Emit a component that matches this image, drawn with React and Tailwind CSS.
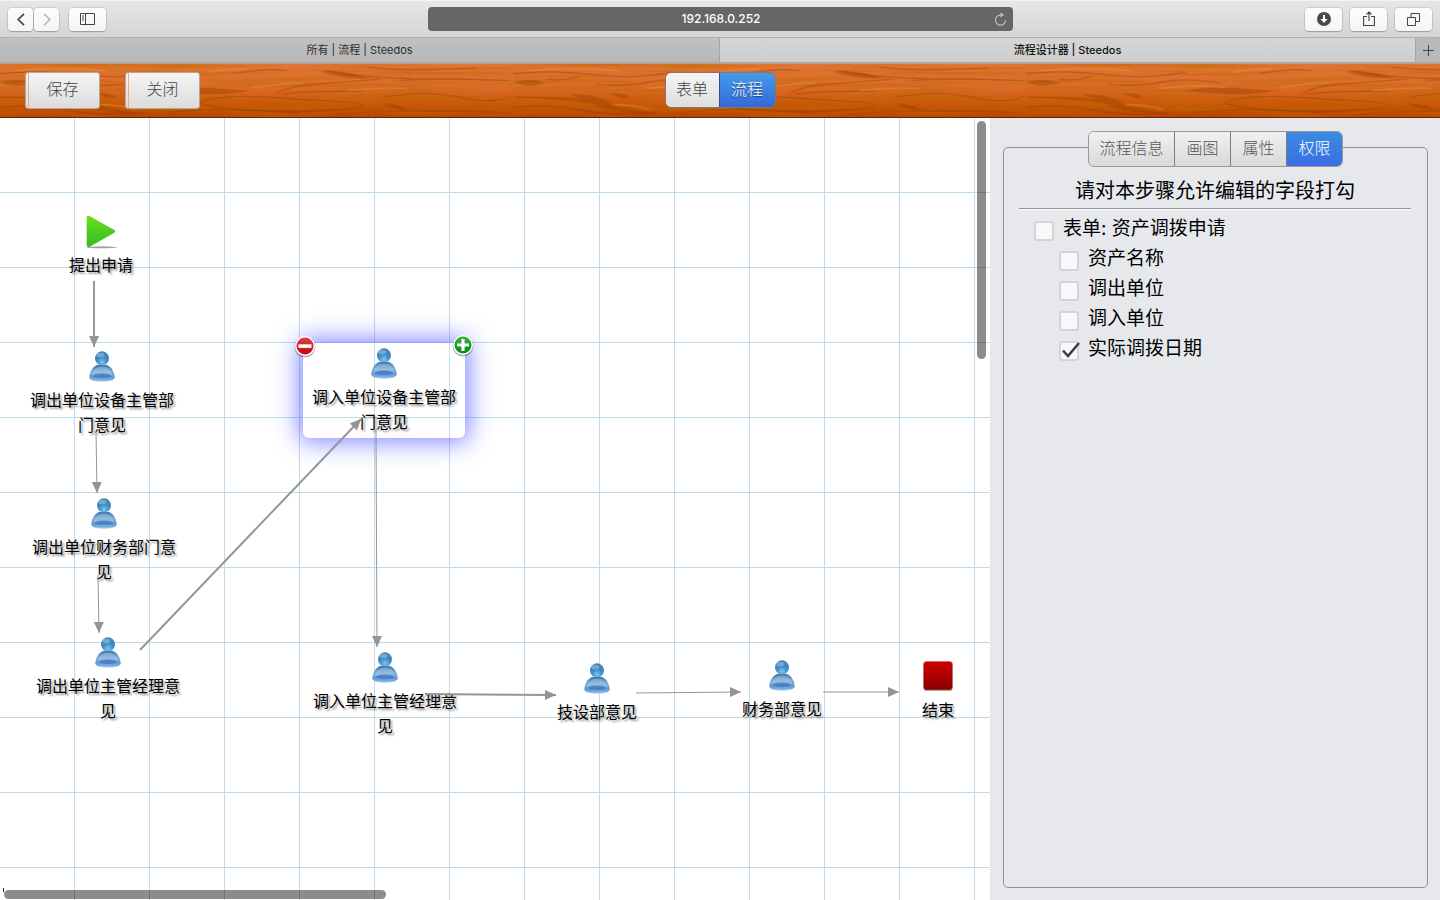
import React from 'react';

const chromeButton =
  'flex h-[23px] items-center justify-center rounded bg-gradient-to-b from-[#fdfdfd] to-[#f4f4f4] shadow-[0_0_1px_1px_rgba(0,0,0,0.1),0_1px_1px_rgba(0,0,0,0.2)]';

const canvasNodes = [
  { id: 'start', kind: 'start', label: '提出申请', x: 20, y: 93 },
  { id: 'out-device', kind: 'user', label: '调出单位设备主管部门意见', x: 21, y: 228 },
  { id: 'out-finance', kind: 'user', label: '调出单位财务部门意见', x: 23, y: 375 },
  { id: 'out-manager', kind: 'user', label: '调出单位主管经理意见', x: 27, y: 514 },
  { id: 'in-device', kind: 'user', label: '调入单位设备主管部门意见', x: 303, y: 225, selected: true },
  { id: 'in-manager', kind: 'user', label: '调入单位主管经理意见', x: 304, y: 529 },
  { id: 'tech', kind: 'user', label: '技设部意见', x: 516, y: 540 },
  { id: 'finance', kind: 'user', label: '财务部意见', x: 701, y: 537 },
  { id: 'end', kind: 'end', label: '结束', x: 857, y: 538 },
];

const connections = [
  [94, 163, 94, 229, 2],
  [96, 313, 97, 375, 1],
  [98, 457, 99, 515, 1],
  [140, 532, 361, 301, 2],
  [376, 311, 377, 529, 1],
  [425, 576, 556, 577, 2],
  [636, 575, 741, 574, 1],
  [823, 574, 899, 574, 1],
];

const fields = [
  { id: 'f-name', label: '资产名称', checked: false },
  { id: 'f-out', label: '调出单位', checked: false },
  { id: 'f-in', label: '调入单位', checked: false },
  { id: 'f-date', label: '实际调拨日期', checked: true },
];

function BrowserBar() {
  return (
    <div className="grid h-[38px] shrink-0 grid-cols-[1fr_585px_1fr] items-center border-t border-b border-t-[#f4f4f4] border-b-[#b0b0b0] bg-gradient-to-b from-[#e6e6e6] to-[#d5d5d5] px-2">
      <div className="flex items-center">
        <button aria-label="后退" className={`${chromeButton} w-[25px]`}>
          <svg width="8" height="13" viewBox="0 0 8 13" fill="none" stroke="#444" strokeWidth="1.7">
            <path d="M7 .8 1.2 6.5 7 12.2" />
          </svg>
        </button>
        <button aria-label="前进" className={`${chromeButton} ml-px w-[25px]`}>
          <svg width="8" height="13" viewBox="0 0 8 13" fill="none" stroke="#b3b3b3" strokeWidth="1.5">
            <path d="M1 .8 6.8 6.5 1 12.2" />
          </svg>
        </button>
        <button aria-label="边栏" className={`${chromeButton} ml-[10px] w-[37px]`}>
          <svg width="15" height="12" viewBox="0 0 15 12" fill="none" stroke="#444">
            <path d="M.5.5h14v11H.5zM5.5.5v11M2 3h2M2 5h2M2 7h2" />
          </svg>
        </button>
      </div>
      <div className="grid h-6 grid-cols-[16px_1fr_16px] items-center rounded bg-[#666] pr-1 pl-[6px]">
        <span />
        <span className="text-center text-[12px] font-medium text-white">192.168.0.252</span>
        <button aria-label="重新载入" className="justify-self-end pr-[2px]">
          <svg width="13" height="15" viewBox="0 0 13 15" fill="none" stroke="#bdbdbd" strokeWidth="1.2">
            <path d="M6.5 3.2a5 5 0 1 0 5 5" />
            <path d="M6.3.2 10.3 3.1 6.3 5.600z" fill="#bdbdbd" stroke="none" />
          </svg>
        </button>
      </div>
      <div className="flex items-center justify-end gap-2">
        <button aria-label="下载" className={`${chromeButton} w-[37px]`}>
          <svg width="14" height="14" viewBox="0 0 14 14">
            <circle cx="7" cy="7" r="7" fill="#4a4a4a" />
            <path d="M6 3h2v4h2.6L7 11 3.4 7H6z" fill="#fff" />
          </svg>
        </button>
        <button aria-label="共享" className={`${chromeButton} w-[37px]`}>
          <svg width="12" height="16" viewBox="0 0 12 16" fill="none" stroke="#444" strokeWidth="1.1">
            <path d="M4 5.500H.6v9h10.800v-9H8M6 10V1M3.400 3.400 6 .9l2.600 2.500" />
          </svg>
        </button>
        <button aria-label="标签页概览" className={`${chromeButton} w-[37px]`}>
          <svg width="13" height="13" viewBox="0 0 13 13" fill="none" stroke="#444">
            <path d="M.5 4.500h8v8h-8z" />
            <path d="M4 4.500v-4h8.500v8h-4" />
          </svg>
        </button>
      </div>
    </div>
  );
}

function BrowserTabs() {
  return (
    <div className="flex h-[26px] shrink-0 border-b-2 border-[#b3a398] text-[11px] text-[#2c2c2c]">
      <a href="#all" className="flex w-1/2 items-center justify-center border-r border-[#a5a5a5] bg-gradient-to-b from-[#c1c1c1] to-[#b7b7b7]">
        所有 | 流程 | Steedos
      </a>
      <a href="#designer" className="flex flex-1 items-center justify-center bg-gradient-to-b from-[#d6d6d6] to-[#cdcdcd] font-medium text-[#111]">
        流程设计器 | Steedos
      </a>
      <button aria-label="新标签页" className="flex w-[25px] items-center justify-center border-l border-[#a5a5a5] bg-[#b9b9b9]">
        <svg width="11" height="11" viewBox="0 0 11 11" stroke="#444">
          <path d="M5.500 0v11M0 5.500h11" />
        </svg>
      </button>
    </div>
  );
}

function WoodGrain() {
  return (
    <svg className="absolute inset-0 h-full w-full" aria-hidden="true">
      <defs>
        <linearGradient id="woodBase" x1="0" y1="0" x2="0" y2="1">
          <stop offset="0" stopColor="#e27636" />
          <stop offset="0.45" stopColor="#da6a26" />
          <stop offset="0.75" stopColor="#c95707" />
          <stop offset="1" stopColor="#b24500" />
        </linearGradient>
        <filter id="grain" x="0" y="0" width="100%" height="100%">
          <feTurbulence type="fractalNoise" baseFrequency="0.009 0.25" numOctaves="3" seed="8" />
          <feColorMatrix values="0 0 0 0 0.5  0 0 0 0 0.14  0 0 0 0 0  1.5 0 0 0 -0.6" />
        </filter>
        <filter id="soften" x="-5%" y="-20%" width="110%" height="140%">
          <feGaussianBlur stdDeviation="5 1.6" />
        </filter>
        <pattern id="wood" width="513" height="54" patternUnits="userSpaceOnUse">
          <rect width="513" height="54" fill="url(#woodBase)" />
          <rect width="513" height="54" filter="url(#grain)" />
          <g transform="scale(.3333)" fill="#963600" fillOpacity=".38" filter="url(#soften)">
            <path d="M4 56q40-18 95 0q-50 18-95 0M0 98q160-2 240 12q60 8 80 22q-60-6-100-16q-110-14-220-14M170 90q80 0 130 28q-80-4-130-28M290 86q50 0 60 16q-40 2-60-16M240 125q90 0 190 26q-100 0-190-26" />
            <path d="M470 82q70-16 150-10q70 4 130 8q-80 14-150 10t-130-8M960 22q80-6 150 22q-100 0-150-22M1140 118q60 0 90 22q-60-4-90-22" />
          </g>
          <g transform="scale(.3333)" fill="none" stroke="#8a3200" strokeWidth="4" strokeOpacity=".32" filter="url(#soften)">
            <path d="M100 45q50 8 95-8M0 30q120-14 240 2t240-8M250 62q100 6 160-8t170 2M600 118q20-18 110-20t190 8q190 8 190 18t-90 14q-120 6-230 2t-170-22" />
            <path d="M830 92q20-24 120-32t190-14M850 90q80-10 240-8M700 28q100-16 160-8M980 20q80 20 260 24M1100 10q120 12 330 2M1200 50q100-10 330 0M1150 100q120-22 230 0t150-4" />
            <path d="M0 130q100-12 200 8t230 8M500 145q200-18 400 2M1000 150q200-14 500-5" />
          </g>
          <g transform="scale(.3333)" fill="none" stroke="#f09048" strokeWidth="5" strokeOpacity=".4" filter="url(#soften)">
            <path d="M400 74q100-14 200-4M620 26q70-14 120-10M300 122q80 2 110 16M1040 80q90-12 180-6M760 70q80-10 150-14M40 20q140-12 280 0" />
          </g>
        </pattern>
      </defs>
      <rect width="100%" height="100%" fill="url(#wood)" />
    </svg>
  );
}

function DesignerBar() {
  const plain =
    'h-[37px] w-[75px] rounded-[3px] border border-[#b9a496] bg-[linear-gradient(to_right,transparent_2px,#dfb193_2px,#dfb193_3px,transparent_3px),linear-gradient(#f5f5f5,#dcdcdc)] pb-[3px] text-base font-light text-[#444]';
  return (
    <header className="relative h-[54px] shrink-0 overflow-hidden border-b border-[#7a1c00]">
      <WoodGrain />
      <div className="relative grid grid-cols-[1fr_auto_1fr] pt-2">
        <div className="flex gap-[25px] pl-[25px]">
          <button className={plain}>保存</button>
          <button className={plain}>关闭</button>
        </div>
        <div className="flex h-9 overflow-hidden rounded-md border border-[#8c7468] text-base font-light">
          <button className="w-[53px] bg-gradient-to-b from-[#f4f4f4] to-[#dedede] pb-[2px] text-[#444]">表单</button>
          <button className="w-14 border-l border-[#2d4f96] bg-gradient-to-b from-[#459be8] to-[#3568d8] pb-[2px] text-white [text-shadow:0_1px_1px_rgba(0,0,0,0.5)]">
            流程
          </button>
        </div>
      </div>
    </header>
  );
}

function PersonIcon() {
  return (
    <svg width="26" height="31" viewBox="0 0 78 93">
      <ellipse cx="39" cy="86" rx="33" ry="6" fill="#a9c6e0" opacity=".8" />
      <path d="M1 79C2 58 16 42 28 41h22c12 1 26 17 27 38 0 4-2 6-6 7-18 4-46 4-64 0-4-1-6-3-6-7z" fill="url(#personBody)" />
      <path d="M7 74c3-16 14-27 32-27s29 11 32 27c-14-8-50-8-64 0z" fill="#d7ebfa" opacity=".3" />
      <path d="M12 74c10-9 44-9 54 0-2 9-52 9-54 0z" fill="#2f69b4" opacity=".5" />
      <circle cx="39" cy="22" r="21" fill="url(#personHead)" />
      <ellipse cx="34" cy="12" rx="12" ry="7" fill="#fff" opacity=".28" />
    </svg>
  );
}

function PlayIcon() {
  return (
    <svg width="32" height="35" viewBox="0 3 96 105">
      <ellipse cx="50" cy="97" rx="46" ry="3" fill="#777" opacity=".7" />
      <path d="M5 8q0-8 8-5l74 41q7 5 0 10L14 95q-9 3-9-6z" fill="url(#playFill)" />
    </svg>
  );
}

function StopIcon() {
  return (
    <svg width="30" height="31" viewBox="0 0 30 31">
      <rect x="1" y="27" width="28" height="3" rx="1" fill="#bbb" />
      <rect x=".5" y=".5" width="29" height="28.500" rx="3" fill="url(#stopFill)" stroke="#b66" strokeWidth=".6" />
    </svg>
  );
}

function Badge({ kind }) {
  const add = kind === 'add';
  return (
    <button
      aria-label={add ? '添加' : '删除'}
      className={add ? 'absolute -top-[9px] -right-[9px]' : 'absolute -top-2 -left-[9px]'}
    >
      <svg className="block overflow-visible" width="22" height="22" viewBox="0 0 22 22">
        <circle cx="11" cy="12" r="10.500" fill="#000" opacity=".3" />
        <circle cx="11" cy="11" r="10" fill="#fff" />
        <circle cx="11" cy="11" r="8.500" fill={add ? 'url(#addFill)' : 'url(#removeFill)'} />
        {add ? <path d="M9.400 5h3.200v4.400H17v3.200h-4.400V17H9.400v-4.400H5V9.400h4.400z" fill="#fff" /> : <path d="M4.500 9.300h13v3.600h-13z" fill="#fff" />}
      </svg>
    </button>
  );
}

function Node({ node }) {
  return (
    <div
      className={`absolute flex w-[162px] flex-col items-center pt-[5px] ${
        node.selected ? 'h-[95px] rounded-md shadow-[0_0_24px_4px_rgba(85,95,255,0.75)]' : ''
      }`}
      style={{ left: node.x, top: node.y }}
    >
      <div className="flex h-[37px] justify-center">
        {node.kind === 'user' && <PersonIcon />}
        {node.kind === 'start' && <PlayIcon />}
        {node.kind === 'end' && <StopIcon />}
      </div>
      <div className="w-[150px] text-center text-base leading-[25px] text-black [text-shadow:2px_2px_2px_rgba(0,0,0,0.4)]">
        {node.label}
      </div>
      {node.selected && <Badge kind="remove" />}
      {node.selected && <Badge kind="add" />}
    </div>
  );
}

function Gradients() {
  return (
    <defs>
      <radialGradient id="personHead" cx=".5" cy=".8" r=".85">
        <stop offset="0" stopColor="#7cc6ee" />
        <stop offset=".45" stopColor="#3c8ac4" />
        <stop offset="1" stopColor="#4a7fae" />
      </radialGradient>
      <linearGradient id="personBody" x1="0" y1="0" x2="0" y2="1">
        <stop offset="0" stopColor="#3f75ac" />
        <stop offset=".45" stopColor="#79a9d6" />
        <stop offset=".75" stopColor="#5f97d2" />
        <stop offset="1" stopColor="#7db4ea" />
      </linearGradient>
      <linearGradient id="playFill" x1="0" y1="0" x2="0" y2="1">
        <stop offset="0" stopColor="#6be01c" />
        <stop offset="1" stopColor="#35b822" />
      </linearGradient>
      <linearGradient id="stopFill" x1="0" y1="0" x2="0" y2="1">
        <stop offset="0" stopColor="#d00000" />
        <stop offset="1" stopColor="#8a0000" />
      </linearGradient>
      <linearGradient id="addFill" x1="0" y1="0" x2="0" y2="1">
        <stop offset="0" stopColor="#35b53a" />
        <stop offset="1" stopColor="#008a10" />
      </linearGradient>
      <linearGradient id="removeFill" x1="0" y1="0" x2="0" y2="1">
        <stop offset="0" stopColor="#e04048" />
        <stop offset="1" stopColor="#c00812" />
      </linearGradient>
    </defs>
  );
}

function Connection({ line }) {
  const [x1, y1, x2, y2, width] = line;
  const angle = (Math.atan2(y2 - y1, x2 - x1) * 180) / Math.PI;
  return (
    <g>
      <line x1={x1} y1={y1} x2={x2} y2={y2} strokeWidth={width} stroke="#969696" />
      <path d="M0 0-11-5v10z" fill="#949494" transform={`translate(${x2} ${y2}) rotate(${angle})`} />
    </g>
  );
}

function FlowCanvas() {
  return (
    <main className="relative min-w-0 flex-1 overflow-hidden bg-white bg-[linear-gradient(to_right,transparent_74px,#c3dae8_74px),linear-gradient(to_bottom,transparent_74px,#bcdcea_74px)] bg-[length:75px_75px]">
      {canvasNodes.map((node) => (
        <Node key={node.id} node={node} />
      ))}
      <svg className="pointer-events-none absolute inset-0 h-full w-full">
        <Gradients />
        {connections.map((line) => (
          <Connection key={line.join('-')} line={line} />
        ))}
        <path d="M3.500 770v4" stroke="#222" />
      </svg>
      <div className="absolute top-[3px] right-1 h-[238px] w-[9px] rounded-full bg-black/45" />
      <div className="absolute bottom-px left-1 h-[9px] w-[382px] rounded-full bg-black/45" />
    </main>
  );
}

function CheckRow({ id, label, checked, nested }) {
  return (
    <div className={`flex h-[30px] items-center ${nested ? 'pl-10' : 'pl-[15px]'}`}>
      <span className="grid pt-1">
        <input
          id={id}
          type="checkbox"
          defaultChecked={checked}
          className="peer col-start-1 row-start-1 h-5 w-5 appearance-none rounded-[3px] border-2 border-[#d3d4d6] bg-[#f8f8fa]"
        />
        <svg className="pointer-events-none invisible col-start-1 row-start-1 overflow-visible peer-checked:visible" width="20" height="20" viewBox="0 0 20 20" fill="none" stroke="#3f3f3f" strokeWidth="2.600">
          <path d="M4 9.500 9 15 20 2" />
        </svg>
      </span>
      <label htmlFor={id} className="pl-[9px] text-[19px] leading-[30px] text-black">
        {label}
      </label>
    </div>
  );
}

function PermissionPanel() {
  const tab = 'border-r border-[#7d7d7d] bg-gradient-to-b from-[#f1f1f1] to-[#d9d9d9] pb-[2px] text-[#555]';
  return (
    <aside className="flex w-[450px] shrink-0 flex-col bg-[#e6e8ec] pt-[13px] pr-3 pb-3 pl-[13px]">
      <div className="z-10 flex h-9 self-center overflow-hidden rounded-md border border-[#999] text-base font-light">
        <button className={`${tab} w-[86px]`}>流程信息</button>
        <button className={`${tab} w-14`}>画图</button>
        <button className={`${tab} w-14`}>属性</button>
        <button className="w-[55px] bg-gradient-to-b from-[#3b8ae2] to-[#3a6fe0] pb-[2px] text-white">权限</button>
      </div>
      <section className="-mt-5 flex-1 rounded-[5px] border border-[#8f9297] pt-[26px] pr-4 pl-[15px]">
        <h2 className="border-b border-[#8f9297] text-center text-[20px] leading-[34px] text-black shadow-[0_1px_0_#fff]">
          请对本步骤允许编辑的字段打勾
        </h2>
        <div className="pt-[5px]">
          <CheckRow id="f-form" label="表单: 资产调拨申请" checked={false} />
          {fields.map((field) => (
            <CheckRow key={field.id} {...field} nested />
          ))}
        </div>
      </section>
    </aside>
  );
}

export default function App() {
  return (
    <div className="flex h-screen flex-col font-['Inter','Noto_Sans_CJK_SC',sans-serif]">
      <BrowserBar />
      <BrowserTabs />
      <DesignerBar />
      <div className="flex min-h-0 flex-1">
        <FlowCanvas />
        <PermissionPanel />
      </div>
    </div>
  );
}
